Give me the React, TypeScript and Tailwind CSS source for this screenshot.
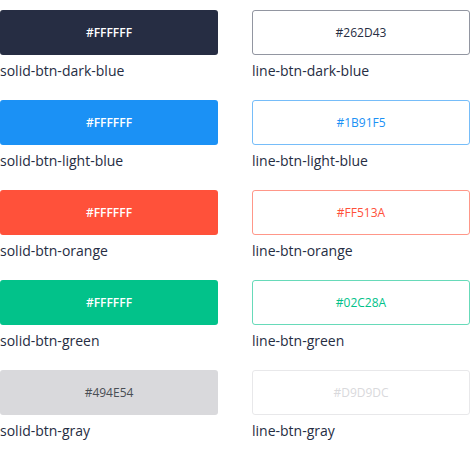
const SOLID = [
  { name: 'solid-btn-dark-blue', label: '#FFFFFF', cls: 'bg-[#262D43] text-white font-semibold' },
  { name: 'solid-btn-light-blue', label: '#FFFFFF', cls: 'bg-[#1B91F5] text-white font-semibold' },
  { name: 'solid-btn-orange', label: '#FFFFFF', cls: 'bg-[#FF513A] text-white font-semibold' },
  { name: 'solid-btn-green', label: '#FFFFFF', cls: 'bg-[#02C28A] text-white font-semibold' },
  { name: 'solid-btn-gray', label: '#494E54', cls: 'bg-[#D9D9DC] text-[#494E54]' },
]

const LINE = [
  { name: 'line-btn-dark-blue', label: '#262D43', cls: 'border-[#262D43]/50 text-[#262D43]' },
  { name: 'line-btn-light-blue', label: '#1B91F5', cls: 'border-[#1B91F5]/60 text-[#1B91F5]' },
  { name: 'line-btn-orange', label: '#FF513A', cls: 'border-[#FF513A]/60 text-[#FF513A]' },
  { name: 'line-btn-green', label: '#02C28A', cls: 'border-[#02C28A]/60 text-[#02C28A]' },
  { name: 'line-btn-gray', label: '#D9D9DC', cls: 'border-[#D9D9DC]/60 text-[#D9D9DC]' },
]

export default function App() {
  return (
    <div
      className="w-[470px] h-[469px] bg-white pt-[10px] grid grid-cols-[218px_218px] gap-x-[34px]"
      style={{ fontFamily: '"Open Sans", sans-serif' }}
    >
      <div className="flex flex-col gap-[19px]">
        {SOLID.map((b) => (
          <div key={b.name}>
            <div className={'h-[45px] rounded-[3px] flex items-center justify-center text-[12px] ' + b.cls}>
              {b.label}
            </div>
            <div className="mt-[6px] text-[14px] leading-[20px] text-[#262D43]">{b.name}</div>
          </div>
        ))}
      </div>
      <div className="flex flex-col gap-[19px]">
        {LINE.map((b) => (
          <div key={b.name}>
            <div className={'h-[45px] rounded-[3px] border flex items-center justify-center text-[12px] ' + b.cls}>
              {b.label}
            </div>
            <div className="mt-[6px] text-[14px] leading-[20px] text-[#262D43]">{b.name}</div>
          </div>
        ))}
      </div>
    </div>
  )
}
